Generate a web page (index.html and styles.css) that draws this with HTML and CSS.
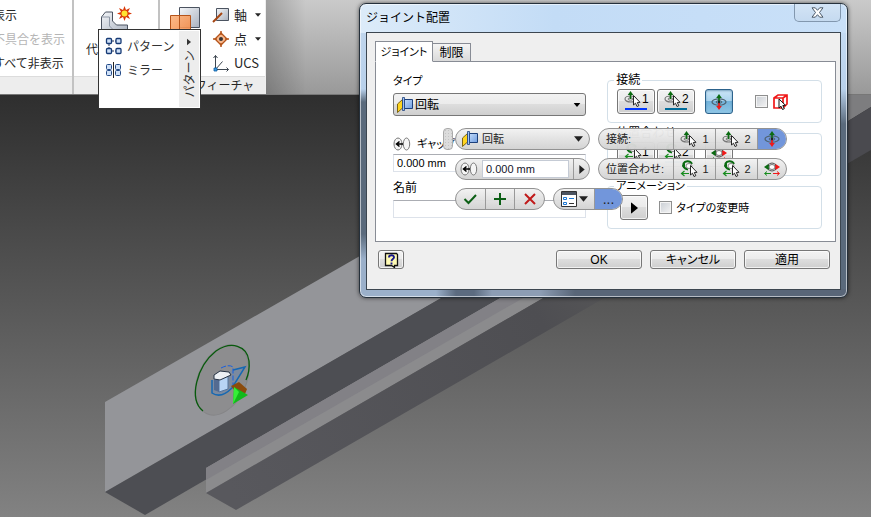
FILE: index.html
```html
<!DOCTYPE html>
<html lang="ja">
<head>
<meta charset="utf-8">
<title>ジョイント配置</title>
<link rel="stylesheet" href="styles.css">
</head>
<body>
<svg class="sprite" aria-hidden="true">
  <defs>
    <linearGradient id="gBlue" x1="0" y1="0" x2="1" y2="1"><stop offset="0" stop-color="#c4dcfa"/><stop offset="1" stop-color="#6f9de0"/></linearGradient>
    <linearGradient id="gSteel" x1="0" y1="0" x2="1" y2="1"><stop offset="0" stop-color="#f4f6f9"/><stop offset="1" stop-color="#a9b1be"/></linearGradient>
    <linearGradient id="gOrange" x1="0" y1="0" x2="1" y2="1"><stop offset="0" stop-color="#fbb27c"/><stop offset="1" stop-color="#f58a45"/></linearGradient>
  </defs>
  <symbol id="rotate" viewBox="0 0 18 18">
    <path d="M1.500 8L6.500 3.500V12L1.500 16.500z" fill="#ffd51f" stroke="#7c6412"/>
    <path d="M8.500 3.500h8v9h-8z" fill="url(#gBlue)" stroke="#1c3f7a"/>
    <path d="M6.500 1.500v13h2v-13z" fill="#9fc2f5" stroke="#1c3f7a" stroke-width=".8"/>
  </symbol>
  <symbol id="gap" viewBox="0 0 18 14">
    <ellipse cx="5" cy="7" rx="4" ry="6" fill="#f5f5f5" stroke="#777"/>
    <ellipse cx="13.500" cy="7" rx="3.200" ry="6" fill="#f5f5f5" stroke="#777"/>
    <path d="M10 7H4M6.500 4.500L3.500 7l3 2.500" fill="none" stroke="#000" stroke-width="1.500"/>
  </symbol>
  <symbol id="pick" viewBox="0 0 18 18">
    <ellipse cx="6.500" cy="9" rx="5.500" ry="3" fill="none" stroke="#777" stroke-width="1.200"/>
    <ellipse cx="6.500" cy="9" rx="2.500" ry="1.200" fill="none" stroke="#777"/>
    <path d="M6.500 9V3" stroke="#0b6b12" stroke-width="1.600"/><path d="M3.700 5L6.500 1l2.800 4z" fill="#0b6b12"/>
    <path d="M9.500 5.500v9.500l2-1.800 1.500 3.300 1.800-.8-1.500-3.200 2.700-.2z" fill="#fff" stroke="#111" stroke-width=".9"/>
  </symbol>
  <symbol id="alignpick" viewBox="0 0 18 18">
    <path d="M12 4C10 .500 5 .500 3.500 3.500 2.500 6 4 8.500 8 9.500" fill="none" stroke="#0b6b12" stroke-width="2"/>
    <path d="M5 2.500L2 6l3 2.500z" fill="#0b6b12"/>
    <ellipse cx="9" cy="6" rx="3" ry="2.500" fill="#fff" stroke="#888"/>
    <path d="M9 13.500H2M4.500 11L1.500 13.500l3 2.500" fill="none" stroke="#168c1d" stroke-width="1.200"/>
    <path d="M10.500 5.500v9.500l2-1.800 1.500 3.300 1.800-.8-1.500-3.200 2.700-.2z" fill="#fff" stroke="#111" stroke-width=".9"/>
  </symbol>
  <symbol id="flip" viewBox="0 0 18 18">
    <ellipse cx="9" cy="9" rx="7" ry="3.200" fill="none" stroke="#4f6473" stroke-width="1.300"/>
    <ellipse cx="9" cy="9" rx="3" ry="1.300" fill="none" stroke="#4f6473"/>
    <path d="M9 9V4" stroke="#0b6b12" stroke-width="1.600"/><path d="M6.200 5L9 1l2.800 4z" fill="#0b6b12"/>
    <path d="M9 10v4" stroke="#f01818" stroke-width="1.600"/><path d="M6.200 13L9 17l2.800-4z" fill="#f01818"/>
    <circle cx="9" cy="9" r="1.200" fill="#222"/>
  </symbol>
  <symbol id="alignflip" viewBox="0 0 18 18">
    <path d="M1 7L6 3.500v7z" fill="#0b6b12"/><path d="M17 7L12 3.500v7z" fill="#f01818"/>
    <path d="M5 5Q9 1 13 5M5 9q4 4 8 0" fill="none" stroke="#555"/>
    <ellipse cx="9" cy="7" rx="3" ry="2.500" fill="#fff" stroke="#777"/>
    <path d="M8 13.500H2M4 11.500L1.500 13.500l2.500 2" fill="none" stroke="#168c1d"/>
    <path d="M10 13.500h6M14 11.500l2.500 2-2.500 2" fill="none" stroke="#f01818"/>
  </symbol>
  <symbol id="down" viewBox="0 0 10 6"><path d="M0 0h10L5 6z" fill="currentColor"/></symbol>
  <symbol id="right" viewBox="0 0 6 10"><path d="M0 0v10l6-5z" fill="currentColor"/></symbol>
</svg>

<main class="workspace">
  <svg class="scene" viewBox="0 0 871 517" preserveAspectRatio="xMinYMin slice" aria-hidden="true">
    <defs>
      <linearGradient id="sky" x1="0" y1="0" x2="0" y2="1"><stop offset=".18" stop-color="#2e2e2e"/><stop offset="1" stop-color="#828282"/></linearGradient>
      <linearGradient id="fade" gradientUnits="userSpaceOnUse" x1="236" y1="500" x2="600" y2="300"><stop offset="0" stop-color="#58585d"/><stop offset=".85" stop-color="#4e4e52"/><stop offset="1" stop-color="#545456"/></linearGradient>
    </defs>
    <path d="M0 0H871V517H0z" fill="url(#sky)"/>
    <path d="M105 402L400 233H560V297H443L105 492z" fill="#949599"/>
    <path d="M105 492L443 297H520L145 515z" fill="#4d4e53"/>
    <path d="M206 468L502 297H545L206 493z" fill="#8b8b8d"/>
    <path d="M206 468L502 297H525L206 480z" fill="#828186"/>
    <path d="M206 493L545 297H606L236 510z" fill="url(#fade)"/>
    <path d="M840 95H871V107L840 126z" fill="#7d7d7f"/>
    <path d="M840 126L871 107V150L840 168z" fill="#4a4a4f"/>
    <ellipse cx="222" cy="380" rx="24" ry="37" transform="rotate(25 222 380)" fill="#8d8d8f" stroke="#858587"/>
    <path d="M203 411C188 399 197 366 216 351C231 341 247 345 249 361Q250 371 246 380" fill="none" stroke="#075a0c" stroke-width="1.300"/>
    <path d="M212 380v13q9 6 20-5l13-21-12 3" fill="#7188aa" fill-opacity=".6" stroke="#1668b2" stroke-width="1.500"/>
    <path d="M221 368q8-4 12-1v18" fill="none" stroke="#175fe0" stroke-dasharray="5 2"/>
    <path d="M219 379l9-3v13l-9 3z" fill="#b8d4f4" stroke="#54749c"/><path d="M214 380l5-1v13l-5-2z" fill="#536b91"/>
    <path d="M214 375l6-4 9 1 2 3-11 5-6-1z" fill="#edf0f4" stroke="#263244"/>
    <path d="M231 386l8-4 8 7-2 5-10-3z" fill="#8b4b0c"/>
    <path d="M234 387l14 8-15 9z" fill="#12ba1b"/><path d="M234 387l5 5-6 12z" fill="#34ef36"/>
  </svg>

  <header class="ribbon">
    <section class="panel visibility">
      <div class="tools cut"><button>表示</button><button disabled>不具合を表示</button><button>すべて非表示</button></div>
      <div class="caption"></div>
    </section>
    <section class="panel component">
      <div class="tools big">
        <svg width="32" height="30" viewBox="0 0 32 30"><path d="M1.500 29V14l4-5h7v9l4 4h11v8h-12z" fill="url(#gSteel)" stroke="#4b5360"/><path d="M1.500 14h8v9l6 6" fill="none" stroke="#8f98a6"/><path d="M24.500 3l1.500 4 4-2-2 4 4 1.500-4 1.500 2 4-4-2-1.500 4-1.500-4-4 2 2-4-4-1.500 4-1.500-2-4 4 2z" fill="#d93807"/><circle cx="24.500" cy="10.500" r="3" fill="#ffe532"/></svg>
        <button>代替</button>
      </div>
      <div class="caption"></div>
    </section>
    <section class="panel features">
      <div class="split">
        <svg width="32" height="32" viewBox="0 0 32 32"><path d="M10.500 7.500h20v20h-20z" fill="url(#gSteel)" stroke="#4b5360"/><path d="M1.500 15.500h20v18h-20z" fill="url(#gOrange)" fill-opacity=".9" stroke="#b5541a"/><path d="M10.500 16v16" stroke="#b5541a"/></svg>
        <div class="tools axes">
          <button><svg width="18" height="18" viewBox="0 0 18 18"><path d="M4.500 2.500h12v12h-12z" fill="url(#gSteel)" stroke="#4b5360"/><path d="M1 16l9-9" stroke="#a64613" stroke-width="2"/></svg>軸<svg class="tiny" width="6" height="4"><use href="#down"/></svg></button>
          <button><svg width="18" height="18" viewBox="0 0 18 18"><path d="M9 3l6 6-6 6-6-6z" fill="#f8b98e" stroke="#b5541a" stroke-width="1.300"/><path d="M9 1v4M9 13v4M1 9h4M13 9h4" stroke="#b5541a" stroke-width="1.500"/><circle cx="9" cy="9" r="2" fill="#333"/></svg>点<svg class="tiny" width="6" height="4"><use href="#down"/></svg></button>
          <button><svg width="18" height="18" viewBox="0 0 18 18"><path d="M3.500 1.500v14h13M1.500 4l2-2.500 2 2.500M14.500 13.500l2 2-2 2M3.500 15.500l7-8" fill="none" stroke="#3d4650"/><path d="M2 14h3v3H2z" fill="#3d9fe8" stroke="#0e5b9f" stroke-width=".8"/></svg>UCS</button>
        </div>
      </div>
      <div class="caption">作業フィーチャ</div>
    </section>
    <div class="ribbon-rest"></div>
  </header>

  <nav class="flyout">
    <div class="flyout-items">
      <button><svg width="18" height="18" viewBox="0 0 18 18"><path d="M4 4h10M4 14h10M4 4v10" stroke="#1c2f55" stroke-dasharray="2 1"/><g fill="#cfe1f8" stroke="#173b76" stroke-width="1.300"><rect x="1.500" y="1.500" width="5" height="5" rx="1"/><rect x="11" y="1.500" width="5" height="5" rx="1"/><rect x="1.500" y="11.500" width="5" height="5" rx="1"/><rect x="11" y="11.500" width="5" height="5" rx="1"/></g></svg>パターン</button>
      <button><svg width="18" height="18" viewBox="0 0 18 18"><g fill="#cfe1f8" stroke="#244b88"><rect x="1.500" y="3.500" width="5" height="5" rx="1"/><rect x="10.500" y="3.500" width="5" height="5" rx="1"/><rect x="1.500" y="9.500" width="5" height="5" rx="1"/><rect x="10.500" y="9.500" width="5" height="5" rx="1"/></g><path d="M8.500 1v16" stroke="#222"/></svg>ミラー</button>
    </div>
    <div class="flyout-tab"><svg width="4" height="8"><use href="#right"/></svg><span>パターン</span></div>
  </nav>

  <section class="dialog" role="dialog" aria-labelledby="dialog-title">
    <div class="titlebar">
      <h1 id="dialog-title">ジョイント配置</h1>
      <button class="close" aria-label="閉じる"><svg width="13" height="11" viewBox="0 0 13 11"><path d="M1 .8h3.300L6.500 3.300 8.700.8H12L8.500 5.500 12 10.200H8.700L6.500 7.700 4.300 10.200H1l3.500-4.700z" fill="#fff" stroke="#4c5a6a"/></svg></button>
    </div>
    <div class="client">
      <div class="tabs" role="tablist"><button class="tab active" role="tab" aria-selected="true">ジョイント</button><button class="tab" role="tab">制限</button></div>
      <div class="page">
        <div class="col left">
          <label for="type">タイプ</label>
          <div class="combo"><svg width="18" height="18"><use href="#rotate"/></svg><select id="type"><option>回転</option></select><svg class="arrow" width="8" height="4"><use href="#down"/></svg></div>
          <label class="gap-label" for="gap-value"><svg width="18" height="14"><use href="#gap"/></svg>ギャップ</label>
          <input class="field" id="gap-value" value="0.000 mm">
          <label class="name-label" for="name">名前</label>
          <input class="field" id="name">
        </div>
        <div class="col right">
          <fieldset>
            <legend>接続</legend>
            <button class="pick blue"><svg width="18" height="18"><use href="#pick"/></svg>1</button>
            <button class="pick teal"><svg width="18" height="18"><use href="#pick"/></svg>2</button>
            <button class="toggle on" aria-label="反転"><svg width="18" height="18"><use href="#flip"/></svg></button>
            <label class="solid"><input type="checkbox"><svg width="18" height="18" viewBox="0 0 18 18"><path d="M2 5l4-3h9v9l-4 4H2zM2 5h9v10M11 5l4-3" fill="#fff" stroke="#f01818" stroke-width="1.700"/><path d="M7 6v9l2-1.800 1.500 3.300 1.800-.8-1.500-3.200 2.700-.2z" fill="#fff" stroke="#111"/></svg></label>
          </fieldset>
          <fieldset>
            <legend>位置合わせ</legend>
            <button class="pick blue"><svg width="18" height="18"><use href="#alignpick"/></svg>1</button>
            <button class="pick teal"><svg width="18" height="18"><use href="#alignpick"/></svg>2</button>
            <button class="toggle" aria-label="反転"><svg width="18" height="18"><use href="#alignflip"/></svg></button>
          </fieldset>
          <fieldset>
            <legend>アニメーション</legend>
            <button class="toggle play" aria-label="再生"><svg width="7" height="12" viewBox="0 0 6 10"><use href="#right"/></svg></button>
            <label class="change"><input type="checkbox">タイプの変更時</label>
          </fieldset>
        </div>
      </div>
      <footer>
        <button class="help" aria-label="ヘルプ"><svg width="15" height="16" viewBox="0 0 15 16"><path d="M1.500 1.500h11l1 1v11h-3v2l-3-2h-6z" fill="#fffbb5" stroke="#111" stroke-width="1.300"/><path d="M5 5.500C5 2.500 10 2.500 10 5.300 10 7.200 7.500 7 7.500 9.300M7.500 10.500v2" fill="none" stroke="#18188c" stroke-width="1.900"/></svg></button>
        <button>OK</button><button>キャンセル</button><button>適用</button>
      </footer>
    </div>
  </section>

  <section class="mini" aria-label="ミニ ツールバー">
    <div class="grip"></div>
    <div class="mini-left">
      <div class="pill type"><svg width="18" height="18"><use href="#rotate"/></svg><select aria-label="タイプ"><option>回転</option></select><svg width="9" height="6"><use href="#down"/></svg></div>
      <div class="pill offset"><svg width="18" height="14"><use href="#gap"/></svg><input aria-label="ギャップ" value="0.000 mm"><button aria-label="展開"><svg width="6" height="9"><use href="#right"/></svg></button></div>
      <div class="actions">
        <div class="pill">
          <button aria-label="OK"><svg width="14" height="14" viewBox="0 0 14 14"><path d="M1.500 7l4 4L13 3" fill="none" stroke="#0c5f15" stroke-width="2"/></svg></button>
          <button aria-label="適用"><svg width="14" height="14" viewBox="0 0 14 14"><path d="M7 1v12M1 7h12" stroke="#0c5f15" stroke-width="2"/></svg></button>
          <button aria-label="キャンセル"><svg width="14" height="14" viewBox="0 0 14 14"><path d="M2 2l10 10M12 2L2 12" stroke="#c01a1a" stroke-width="2"/></svg></button>
        </div>
        <div class="pill options">
          <button aria-label="オプション"><svg width="16" height="16" viewBox="0 0 16 16"><path d="M.5.500h15v15H.5z" fill="#fff" stroke="#333"/><path d="M1 2.500h14" stroke="#4b5360" stroke-width="3"/><path d="M2.500 6.500h3v2h-3zM2.500 11.500h3v2h-3z" fill="#fff" stroke="#1e78d2"/><path d="M8 7.500h5" stroke="#1e78d2"/><path d="M8 12.500h5" stroke="#333"/></svg><svg width="9" height="6"><use href="#down"/></svg></button>
          <button class="on more">...</button>
        </div>
      </div>
    </div>
    <div class="mini-right">
      <div class="pill group"><span>接続:</span><button><svg width="18" height="18"><use href="#pick"/></svg>1</button><button><svg width="18" height="18"><use href="#pick"/></svg>2</button><button class="on" aria-label="反転"><svg width="18" height="18"><use href="#flip"/></svg></button></div>
      <div class="pill group"><span>位置合わせ:</span><button><svg width="18" height="18"><use href="#alignpick"/></svg>1</button><button><svg width="18" height="18"><use href="#alignpick"/></svg>2</button><button aria-label="反転"><svg width="18" height="18"><use href="#alignflip"/></svg></button></div>
    </div>
  </section>
</main>
</body>
</html>
```
FILE: styles.css
```css
* { box-sizing: border-box; }
body {
  margin: 0;
  font: 12px/16px "Liberation Sans", "Noto Sans CJK JP", sans-serif;
  color: #000;
}
button, input, select { font: inherit; color: inherit; margin: 0; padding: 0; border: 0; background: none; }
button { display: flex; align-items: center; justify-content: center; white-space: nowrap; }
select { appearance: none; flex: 1; min-width: 0; }
svg { flex: none; display: block; }
.sprite { position: absolute; width: 0; height: 0; }
.workspace { position: relative; min-height: 100vh; overflow: hidden; background: #555; }
.scene { position: absolute; inset: 0; width: 100%; height: 100%; }

/* Ribbon */
.ribbon { position: relative; display: flex; color: #262626; font-family: "Noto Sans CJK JP", sans-serif; border-bottom: 1px solid #777; background: #fff; }
.panel { display: flex; flex-direction: column; border-right: 2px solid #c2c2c2; overflow: hidden; }
.tools { display: flex; flex-direction: column; align-items: flex-start; height: 76px; padding-top: 3px; }
.tools button { height: 24px; }
.caption { height: 18px; background: #ededed; border-top: 1px solid #dcdcdc; text-align: center; }
.visibility { width: 74px; }
.cut { margin-left: -7px; }
.tools button:disabled { color: #b5b5b5; }
.component { width: 86px; }
.big { padding-left: 12px; }
.big svg { margin-left: 14px; }
.big button { margin-top: 4px; }
.features { width: 106px; border-right: 1px solid #eee; }
.split { display: flex; padding-left: 9px; gap: 11px; }
.axes button { gap: 4px; font-size: 13px; }
.axes .tiny { margin-left: 4px; }
.ribbon-rest { flex: 1; background: linear-gradient(to right, #0003, #0000 40px), linear-gradient(#cacaca, #999); }

.flyout { position: absolute; left: 98px; top: 29px; width: 103px; display: flex; background: #fff; border: 1px solid #333; color: #333; font-family: "Noto Sans CJK JP", sans-serif; }
.flyout-items { flex: 1; padding: 4px 0 26px 6px; }
.flyout button { height: 24px; gap: 4px; }
.flyout-tab { width: 20px; margin: 1px; background: #ededed; display: flex; flex-direction: column; align-items: center; gap: 4px; padding-top: 7px; }
.flyout-tab span { writing-mode: vertical-rl; text-orientation: sideways; transform: rotate(180deg); }

/* Dialog */
.dialog {
  position: absolute; left: 359px; top: 3px; width: 489px; padding: 0 6px 7px;
  border: 1px solid #25303b; border-radius: 7px;
  box-shadow: inset 0 0 0 1px #ffffff90, 0 0 4px #0009;
  font-feature-settings: "palt";
  background:
    linear-gradient(to right, #9bb0ca 0 76px, #5c6b80 96px 114px, #8d9db4 132px 180px, #596678 215px) bottom / 100% 8px no-repeat,
    linear-gradient(to right, #dcebf9, #c3dcf6 40%, #c9e0f8) top / 100% 29px no-repeat,
    linear-gradient(#c3d7ed, #b9d1eb 85px, #5a6a7c 98px 230px, #9bb0ca 255px) left / 8px 100% no-repeat,
    linear-gradient(#c9e0f8, #b9d1eb 85px, #5a6a7c 120px);
}
.titlebar { height: 28px; display: flex; justify-content: space-between; align-items: flex-start; }
h1 { margin: 0; padding-top: 5px; font: 12px/16px "Noto Sans CJK JP", sans-serif; font-feature-settings: normal; }
.close { width: 47px; height: 18px; border: 1px solid #8297ae; border-top: 0; border-radius: 0 0 5px 5px; background: linear-gradient(#d3e4f5, #c5daf0); }
.client { background: #efefef; border: 1px solid #3c4650; padding: 8px 4px 20px 8px; }
.tabs { display: flex; align-items: flex-end; margin-bottom: -1px; position: relative; }
.tab { height: 19px; width: 38px; border: 1px solid #888c95; border-left: 0; background: linear-gradient(#f4f4f4, #dadada); }
.tab.active { height: 21px; width: 58px; border-left: 1px solid #888c95; border-bottom-color: #fff; background: #fff; font-size: 11px; }
.page { display: flex; gap: 21px; padding: 11px 13px 12px 17px; border: 1px solid #888c95; background: #fff; }
.col { display: flex; flex-direction: column; }
.left { flex: 9; }
.right { flex: 10; gap: 3px; }
.left > label { height: 16px; font-size: 11px; }
.combo { display: flex; align-items: center; gap: 1px; height: 23px; margin-top: 4px; padding: 0 4px 0 2px; border: 1px solid #777; border-radius: 3px; background: linear-gradient(#f2f2f2, #ebebeb 50%, #dddddd 50%, #cfcfcf); }
.left > .gap-label { display: flex; align-items: center; gap: 6px; margin-top: 20px; }
.field { width: 100%; height: 18px; margin-top: 2px; padding: 0 3px; border: 1px solid #dde2ea; border-top-color: #abadb3; background: #fff; font-size: 11px; }
.left > .name-label { margin-top: 8px; font-size: 12px; }
.name-label + .field { margin-top: 4px; }
fieldset { display: flex; align-items: center; gap: 2px; min-width: 0; margin: 0; padding: 2px 9px 5px; height: 50px; border: 1px solid #d3dfe8; border-radius: 4px; }
legend { padding: 0 2px; margin-left: -3px; height: 14px; line-height: 14px; }
fieldset:last-child legend { font-size: 11px; }
.pick, .toggle, footer button { border: 1px solid #777; border-radius: 3px; background: linear-gradient(#f3f3f3, #ebebeb 50%, #dddddd 50%, #cfcfcf); box-shadow: inset 0 0 0 1px #ffffffb0; }
.pick { position: relative; width: 38px; height: 25px; padding-bottom: 5px; }
.pick::after { content: ""; position: absolute; left: 7px; right: 7px; bottom: 3px; height: 2px; background: #0037ff; }
.teal::after { background: #006b99; }
.toggle { width: 28px; height: 25px; margin-left: 8px; }
.toggle.on { border-color: #2c628b; background: linear-gradient(#cbe5f6, #a9d3ee 50%, #73b3db 50%, #8fc6e6); box-shadow: inset 0 1px 2px #2c628b80; }
.toggle.play { margin-left: 3px; }
fieldset label { display: flex; align-items: center; gap: 4px; }
.solid { margin-left: 20px; }
.change { margin-left: 9px; font-size: 11px; }
input[type="checkbox"] { appearance: none; width: 13px; height: 13px; border: 1px solid #8e8f8f; background: linear-gradient(135deg, #c9ced4, #f4f4f4) padding-box; box-shadow: inset 0 0 0 1px #f4f4f4; }
footer { display: flex; gap: 8px; padding: 8px 6px 0 3px; }
footer button { width: 86px; height: 19px; }
footer .help { width: 26px; margin-right: auto; }

/* Mini toolbar */
.mini { position: absolute; left: 443px; top: 128px; display: flex; align-items: flex-start; gap: 2px; font-size: 11px; }
.grip { width: 10px; height: 22px; border: 1px solid #aaa; border-radius: 4px; background: radial-gradient(#c4c4c4 1px, #dcdcdc 1px) 0 0 / 3px 3px; }
.mini-left, .mini-right { display: flex; flex-direction: column; gap: 8px; }
.mini-left { width: 168px; }
.mini-right { width: 189px; margin-left: -27px; }
.pill { display: flex; align-items: center; height: 22px; border: 1px solid #929292; border-radius: 11px; overflow: hidden; background: linear-gradient(#f1f1f1f7, #d2d2d2f7); color: #222; }
.pill button { height: 100%; flex: 1; border-left: 1px solid #999; }
.pill button:first-child { border-left: 0; }
.pill .on { background: #7296db; }
.type, .offset { width: 135px; }
.type { padding: 0 6px 0 5px; gap: 3px; }
.offset { padding-left: 4px; gap: 4px; }
.offset input { flex: 1; min-width: 0; height: 18px; padding-left: 3px; background: #fff; border: 1px solid #c5cbd5; color: #14142a; }
.pill.offset button { flex: 0 0 16px; }
.actions { display: flex; gap: 8px; }
.actions .pill:first-child { width: 90px; }
.actions .options { width: 70px; flex: none; }
.options button { gap: 2px; }
.options .more { font-size: 14px; }
.pill.options button:first-child { flex: 0 0 40px; }
.group span { width: 74px; padding-left: 7px; font-feature-settings: normal; white-space: nowrap; }
.group button { gap: 4px; }
.pill.group button:last-child { flex: 0 0 29px; }
```
